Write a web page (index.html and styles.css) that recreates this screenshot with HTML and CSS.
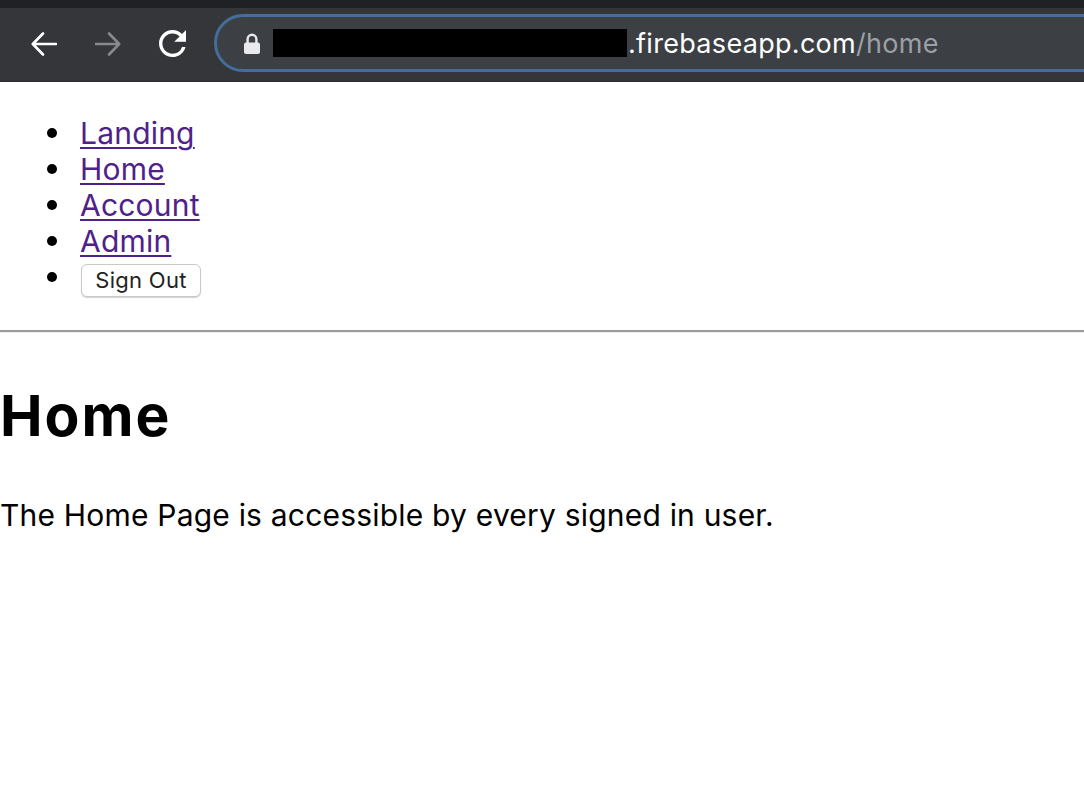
FILE: index.html
```html
<!DOCTYPE html>
<html lang="en">
<head>
<meta charset="utf-8">
<title>Home</title>
<link rel="stylesheet" href="styles.css">
</head>
<body>
<div class="chrome">
  <div class="tabstrip"></div>
  <div class="toolbar">
    <span class="nav-icon">
      <svg width="26" height="24" viewBox="0 0 26 24"><path d="M25 12H2.5M12 1.5L1.8 12L12 22.5" fill="none" stroke="#ffffff" stroke-width="2.6" stroke-linecap="round" stroke-linejoin="round"/></svg>
    </span>
    <span class="nav-icon">
      <svg width="26" height="24" viewBox="0 0 26 24"><path d="M1 12H23.5M14 1.5L24.2 12L14 22.5" fill="none" stroke="#88898c" stroke-width="2.6" stroke-linecap="round" stroke-linejoin="round"/></svg>
    </span>
    <span class="nav-icon reload">
      <svg width="27" height="27" viewBox="4 4 16 16"><path fill="#ffffff" d="M17.65 6.35A7.958 7.958 0 0 0 12 4c-4.42 0-7.990 3.58-7.99 8s3.57 8 7.99 8c3.73 0 6.84-2.55 7.73-6h-2.08A5.99 5.99 0 0 1 12 18c-3.31 0-6-2.690-6-6s2.69-6 6-6c1.66 0 3.14.69 4.220 1.78L13 11h7V4l-2.35 2.35z"/></svg>
    </span>
    <div class="omnibox">
      <svg class="lock" width="16" height="22" viewBox="0 0 16 22"><path d="M3.6 11V7.2a4.4 4.4 0 0 1 8.8 0V11" fill="none" stroke="#e8eaed" stroke-width="2.4"/><rect x="0" y="10.5" width="16" height="11.5" rx="2" fill="#e8eaed"/></svg>
      <span class="redact"></span>
      <span class="url">.firebaseapp.com<span class="path">/home</span></span>
    </div>
  </div>
</div>
<div class="page">
  <ul class="nav">
    <li><a href="#">Landing</a></li>
    <li><a href="#">Home</a></li>
    <li><a href="#">Account</a></li>
    <li><a href="#">Admin</a></li>
    <li><button class="signout" type="button">Sign Out</button></li>
  </ul>
  <hr class="rule">
  <h1 class="title">Home</h1>
  <p class="lead">The Home Page is accessible by every signed in user.</p>
</div>
</body>
</html>
```
FILE: styles.css
```css
html, body {
  margin: 0;
  padding: 0;
  background: #ffffff;
}
body {
  font-family: Inter, "Noto Sans", "Liberation Sans", sans-serif;
  color: #000000;
  overflow: hidden;
}
.chrome {
  display: flex;
  flex-direction: column;
}
.tabstrip {
  height: 8px;
  background: #202124;
}
.toolbar {
  height: 74px;
  background: #35363a;
  display: flex;
  align-items: flex-start;
  padding-left: 31px;
  overflow: hidden;
  box-sizing: border-box;
  border-bottom: 1px solid #2a2b2e;
}
.nav-icon {
  display: flex;
  margin-top: 24px;
  margin-right: 38px;
}
.nav-icon.reload {
  margin-top: 22px;
  margin-right: 28px;
}
.omnibox {
  margin-top: 6px;
  height: 58px;
  flex: 1;
  margin-right: -40px;
  box-sizing: border-box;
  border: 3px solid #446e99;
  border-radius: 29px;
  background: #3c3f43;
  display: flex;
  align-items: center;
  padding-left: 27px;
}
.lock {
  display: block;
  margin-right: 13px;
}
.redact {
  width: 354px;
  height: 28px;
  background: #000000;
  flex: none;
}
.url {
  font-size: 27px;
  color: #ffffff;
  white-space: nowrap;
  letter-spacing: 0.3px;
  margin-left: 1px;
}
.url .path {
  color: #9aa0a6;
}
.nav {
  margin: 33px 0 0 0;
  padding-left: 80px;
  font-size: 30px;
  line-height: 36px;
  list-style: none;
}
.nav li::before {
  content: "";
  display: inline-block;
  width: 10px;
  height: 10px;
  border-radius: 50%;
  background: #000000;
  margin-left: -33px;
  margin-right: 23px;
  vertical-align: 6px;
}
.nav a {
  color: #4e2289;
  text-decoration: underline;
  text-decoration-thickness: 2px;
  text-underline-offset: 3px;
  letter-spacing: 0.2px;
}
.signout {
  font-family: Inter, "Noto Sans", "Liberation Sans", sans-serif;
  font-size: 22px;
  color: #222222;
  background: #ffffff;
  border: 1px solid #c9c9c9;
  border-radius: 6px;
  box-shadow: 0 1px 1px rgba(0, 0, 0, 0.18);
  height: 33px;
  width: 120px;
  padding: 0;
  margin: 5px 0 0 1px;
  line-height: 31px;
  letter-spacing: 0.3px;
}
.rule {
  margin: 33px 0 0 0;
  border: 0;
  border-top: 2px solid #9b9b9b;
  border-bottom: 1px solid #ececec;
  height: 0;
}
.title {
  margin: 50px 0 0 0;
  font-size: 57px;
  line-height: 66px;
  font-weight: 700;
  letter-spacing: 2px;
}
.lead {
  margin: 48px 0 0 0;
  font-size: 30px;
  line-height: 36px;
  letter-spacing: 0.2px;
}
```
